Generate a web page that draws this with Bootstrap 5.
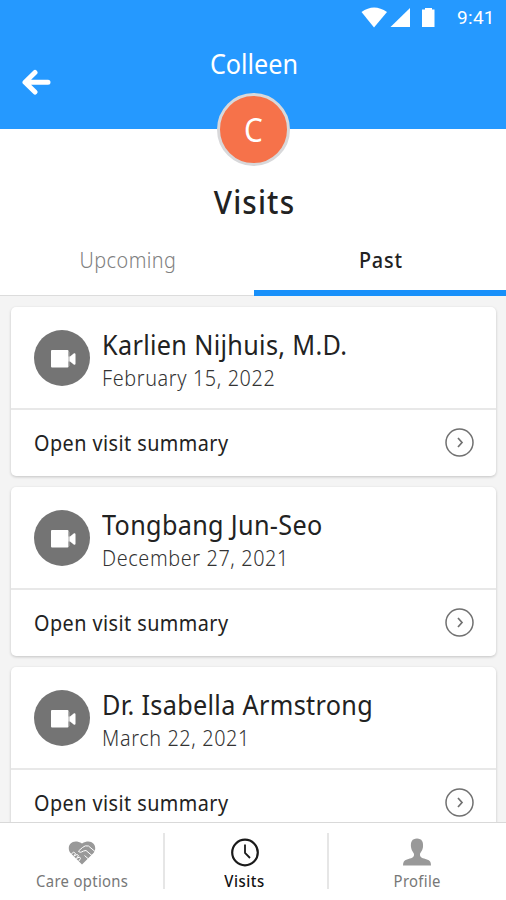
<!DOCTYPE html>
<html lang="en">
<head>
<meta charset="utf-8">
<meta name="viewport" content="width=device-width, initial-scale=1">
<title>Visits</title>
<link href="https://cdn.jsdelivr.net/npm/bootstrap@5.3.0/dist/css/bootstrap.min.css" rel="stylesheet">
<style>
body{font-family:"Noto Sans","Open Sans",sans-serif;color:#222;background:#f4f4f4;height:900px}
svg{display:block;flex:none}
.tx{display:block;white-space:nowrap;transform:scaleX(.9);transform-origin:center}
.tx-l{transform-origin:left}
.app-head{height:129px;background:#2599ff;color:#fff}
.status{height:36px;padding-right:11px}
.clock-text{font:400 19px/36px Roboto,sans-serif;letter-spacing:.3px;width:38px;margin-left:21px}
.who{font-size:28px;line-height:40px;margin-top:7px;padding-left:2px}
.back-btn{position:absolute;left:21px;top:69px;line-height:0}
.avatar{position:absolute;left:50%;top:93px;width:73px;height:73px;margin-left:-36px;border:3px solid #d8d8da;background:#f6724a;font-size:33px;font-weight:400;padding-top:1px}
.title-bar{height:106px;padding-top:48px}
.page-title{font-size:33px;font-weight:500;line-height:50px;letter-spacing:1.3px;padding-left:3px}
.visit-tabs{height:61px;border-bottom:1px solid #dcdcdc}
.visit-tab{width:254px;font-size:22px;line-height:30px;padding:9px 0 0 2px;color:#808080;font-weight:300;letter-spacing:.5px}
.visit-tab.on{width:252px;color:#222;font-weight:500;letter-spacing:1px;border-bottom:6px solid #1890fa;margin-bottom:-1px}
.visit-list{height:526px;padding:11px 10px 0 11px}
.visit{height:169px;margin-bottom:11px;border-radius:5px;box-shadow:0 1px 3px rgba(0,0,0,.2)}
.visit-top{height:103px;padding:1px 23px 0;border-bottom:2px solid #e8e8e8}
.visit-id{padding-top:4px}
.visit-name{font-size:28px;line-height:34px;letter-spacing:.37px}
.visit-date{font-size:22px;line-height:32px;font-weight:300;color:#333;letter-spacing:.7px}
.visit-link{height:66px;padding:0 22.500px 2px 23px;font-size:22px;line-height:32px;letter-spacing:.5px}
.visit-link .tx{margin-top:-1px}
.tabbar{height:78px;border-top:1px solid #d9d9d9}
.tabbar-item{padding-top:14px;color:#777;font-size:16.500px;line-height:23px;letter-spacing:.35px}
.tabbar-item.on{color:#111;font-weight:500;letter-spacing:.6px}
.tab-side{width:163px;padding-left:1px}
.tab-mid{width:162px;padding-right:3px}
.tab-end{padding-right:1px}
.sep{width:2px;height:56px;background:#e6e6e6;margin-top:10px}
</style>
</head>
<body class="d-flex flex-column overflow-hidden m-0">
<header class="app-head position-relative flex-shrink-0">
  <div class="status d-flex align-items-center justify-content-end">
    <svg width="75" height="22" viewBox="0 0 75 22" fill="#fff"><path d="M.5 5Q13-4 26 5L13 20.500Z"/><path d="M49 1V20H29.500Z"/><path d="M61 2.500h3V1h7v1.500h2.500V20H61Z"/></svg>
    <span class="clock-text">9:41</span>
  </div>
  <div class="who text-center"><span class="tx">Colleen</span></div>
  <a href="#" class="back-btn" aria-label="Back"><svg width="30" height="27" viewBox="0 0 30 27" fill="none" stroke="#fff" stroke-width="5" stroke-linecap="round" stroke-linejoin="round"><path d="M14 3.500L4 13.300l10 9.700M5 13.300H27"/></svg></a>
  <div class="avatar rounded-circle d-flex align-items-center justify-content-center"><span class="tx">C</span></div>
</header>
<div class="title-bar bg-white flex-shrink-0"><h1 class="page-title text-center m-0"><span class="tx">Visits</span></h1></div>
<div class="visit-tabs d-flex bg-white flex-shrink-0 text-center">
  <div class="visit-tab"><span class="tx">Upcoming</span></div>
  <div class="visit-tab on"><span class="tx">Past</span></div>
</div>
<main class="visit-list overflow-hidden flex-shrink-0">
  <section class="visit bg-white">
    <div class="visit-top d-flex align-items-center gap-2">
      <div class="round-icon rounded-circle flex-shrink-0 me-1"><svg width="56" height="56" viewBox="0 0 56 56" fill="#fff"><circle cx="28" cy="28" r="28" fill="#747474"/><rect x="17" y="20" width="17.500" height="17.500" rx="1"/><path d="M34 26.500h2l4-3.300q1.500-.3 1.500 1v9.600q0 1.300-1.500 1l-4-3.300h-2Z"/><path d="M35 22v14" stroke="#a8a8a8"/></svg></div>
      <div class="visit-id"><span class="visit-name tx tx-l">Karlien Nijhuis, M.D.</span><span class="visit-date tx tx-l">February 15, 2022</span></div>
    </div>
    <div class="visit-link d-flex align-items-center justify-content-between"><span class="tx tx-l">Open visit summary</span><svg width="29" height="29" viewBox="0 0 29 29" fill="none" stroke="#707070"><circle cx="14.500" cy="14.500" r="13.500" stroke-width="1.500"/><path d="M13 10l4 4.500-4 4.500" stroke-width="1.700"/></svg></div>
  </section>
  <section class="visit bg-white">
    <div class="visit-top d-flex align-items-center gap-2">
      <div class="round-icon rounded-circle flex-shrink-0 me-1"><svg width="56" height="56" viewBox="0 0 56 56" fill="#fff"><circle cx="28" cy="28" r="28" fill="#747474"/><rect x="17" y="20" width="17.500" height="17.500" rx="1"/><path d="M34 26.500h2l4-3.300q1.500-.3 1.500 1v9.600q0 1.300-1.500 1l-4-3.300h-2Z"/><path d="M35 22v14" stroke="#a8a8a8"/></svg></div>
      <div class="visit-id"><span class="visit-name tx tx-l">Tongbang Jun-Seo</span><span class="visit-date tx tx-l">December 27, 2021</span></div>
    </div>
    <div class="visit-link d-flex align-items-center justify-content-between"><span class="tx tx-l">Open visit summary</span><svg width="29" height="29" viewBox="0 0 29 29" fill="none" stroke="#707070"><circle cx="14.500" cy="14.500" r="13.500" stroke-width="1.500"/><path d="M13 10l4 4.500-4 4.500" stroke-width="1.700"/></svg></div>
  </section>
  <section class="visit bg-white">
    <div class="visit-top d-flex align-items-center gap-2">
      <div class="round-icon rounded-circle flex-shrink-0 me-1"><svg width="56" height="56" viewBox="0 0 56 56" fill="#fff"><circle cx="28" cy="28" r="28" fill="#747474"/><rect x="17" y="20" width="17.500" height="17.500" rx="1"/><path d="M34 26.500h2l4-3.300q1.500-.3 1.500 1v9.600q0 1.300-1.500 1l-4-3.300h-2Z"/><path d="M35 22v14" stroke="#a8a8a8"/></svg></div>
      <div class="visit-id"><span class="visit-name tx tx-l">Dr. Isabella Armstrong</span><span class="visit-date tx tx-l">March 22, 2021</span></div>
    </div>
    <div class="visit-link d-flex align-items-center justify-content-between"><span class="tx tx-l">Open visit summary</span><svg width="29" height="29" viewBox="0 0 29 29" fill="none" stroke="#707070"><circle cx="14.500" cy="14.500" r="13.500" stroke-width="1.500"/><path d="M13 10l4 4.500-4 4.500" stroke-width="1.700"/></svg></div>
  </section>
</main>
<nav class="tabbar d-flex bg-white flex-shrink-0">
  <div class="tabbar-item tab-side d-flex flex-column align-items-center">
    <svg width="30" height="32" viewBox="0 0 30 32"><path d="M15 27.500L3.500 16C-1.500 9.500 5 .5 15 6.500 25 .5 31.500 9.500 26.500 16Z" fill="#999"/><path d="M28 14.500L21.500 9Q18 8 15.500 10.500L11.500 14q1 2.500 5 0l2.500-.5 6.500 5.500M4 17.500l2.500-2.500 2 1.500-1.500 2.500 3-1.500 1.500 1-2 3 3-1.500 1 1.500-2 3M17.500 18.500l4 3.500" fill="none" stroke="#fff" stroke-width="1"/></svg>
    <span class="tx">Care options</span></div>
  <div class="sep"></div>
  <div class="tabbar-item tab-mid on d-flex flex-column align-items-center">
    <svg width="30" height="32" viewBox="0 0 30 32" fill="none" stroke="#1a1a1a"><circle cx="15" cy="15.500" r="12.800" stroke-width="2.200"/><path d="M15 7.500V16l5 5" stroke-width="1.800"/></svg>
    <span class="tx">Visits</span></div>
  <div class="sep"></div>
  <div class="tabbar-item tab-end d-flex flex-column align-items-center flex-grow-1">
    <svg width="30" height="32" viewBox="0 0 30 32" fill="#999"><path d="M15 1.500C10 1.500 8.500 5 9 10c.5 4 2.500 5 3 7 .5 4-3 4-7 5.500C2 23.500 1 25 1 28.500H29C29 25 28 23.500 25 22.500c-4-1.500-7.500-1.500-7-5.500.5-2 2.500-3 3-7 .5-5-1-8.500-6-8.500Z"/></svg>
    <span class="tx">Profile</span></div>
</nav>
<script src="https://cdn.jsdelivr.net/npm/bootstrap@5.3.0/dist/js/bootstrap.bundle.min.js"></script>
</body>
</html>
